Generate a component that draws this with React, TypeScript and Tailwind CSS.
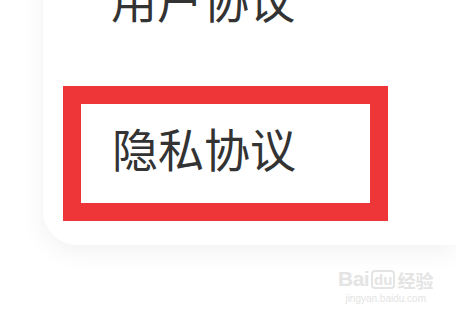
export default function App() {
  const font = { fontFamily: '"Noto Sans CJK SC", "Noto Sans", sans-serif' };
  return (
    <div className="relative w-[456px] h-[321px] overflow-hidden bg-white" style={font}>
      <div className="ml-[43px] mt-[-40px] h-[285px] rounded-bl-[34px] bg-white shadow-[0_6px_26px_rgba(0,0,0,0.06)]">
        <div className="pl-[68px] pt-[10px] text-[46px] leading-[56px] text-[#333333]">用户协议</div>
        <div className="ml-[20px] mt-[60px] w-[325px] h-[135px] border-[18px] border-[#ee3538] flex items-center pl-[31px] pb-[14px]">
          <span className="text-[46px] leading-none text-[#333333]">隐私协议</span>
        </div>
      </div>
      <div className="absolute left-[338px] top-[268px] flex flex-col items-center text-[#e4e4e4]">
        <div className="flex items-end gap-[2px] leading-none">
          <span className="text-[21px] font-bold tracking-tight" style={{ fontFamily: '"Liberation Sans", sans-serif' }}>Bai</span>
          <span className="text-[15px] font-bold rounded-[4px] border-2 border-[#e4e4e4] px-[1px]" style={{ fontFamily: '"Liberation Sans", sans-serif' }}>du</span>
          <span className="text-[18px] font-bold">经验</span>
        </div>
        <span className="mt-[5px] text-[10px] leading-none" style={{ fontFamily: '"Liberation Sans", sans-serif' }}>jingyan.baidu.com</span>
      </div>
    </div>
  );
}
